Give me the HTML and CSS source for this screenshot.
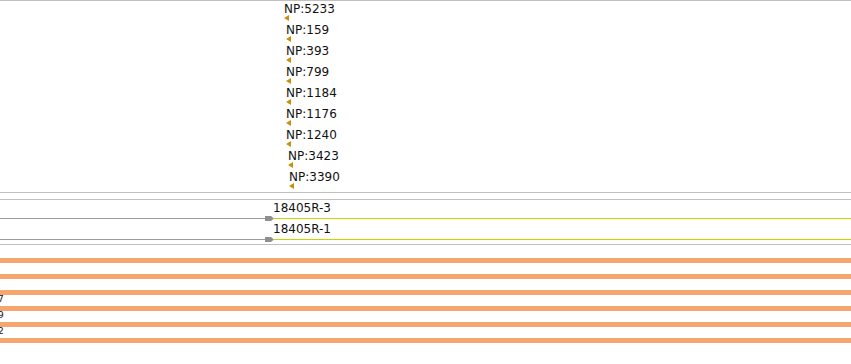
FILE: index.html
```html
<!DOCTYPE html>
<html lang="en">
<head>
  <meta charset="UTF-8" />
  <title>Track view</title>
  <link rel="stylesheet" href="styles.css">
</head>
<body>
  <div class="tracks">
    <div class="track features">
      <div class="feature" style="margin-left:284px"><span class="name">NP:5233</span><svg class="strand" width="5" height="6" viewBox="0 0 5 6"><path d="M5 0V6L0 3Z"/></svg></div>
      <div class="feature" style="margin-left:286px"><span class="name">NP:159</span><svg class="strand" width="5" height="6" viewBox="0 0 5 6"><path d="M5 0V6L0 3Z"/></svg></div>
      <div class="feature" style="margin-left:286px"><span class="name">NP:393</span><svg class="strand" width="5" height="6" viewBox="0 0 5 6"><path d="M5 0V6L0 3Z"/></svg></div>
      <div class="feature" style="margin-left:286px"><span class="name">NP:799</span><svg class="strand" width="5" height="6" viewBox="0 0 5 6"><path d="M5 0V6L0 3Z"/></svg></div>
      <div class="feature" style="margin-left:286px"><span class="name">NP:1184</span><svg class="strand" width="5" height="6" viewBox="0 0 5 6"><path d="M5 0V6L0 3Z"/></svg></div>
      <div class="feature" style="margin-left:286px"><span class="name">NP:1176</span><svg class="strand" width="5" height="6" viewBox="0 0 5 6"><path d="M5 0V6L0 3Z"/></svg></div>
      <div class="feature" style="margin-left:286px"><span class="name">NP:1240</span><svg class="strand" width="5" height="6" viewBox="0 0 5 6"><path d="M5 0V6L0 3Z"/></svg></div>
      <div class="feature" style="margin-left:288px"><span class="name">NP:3423</span><svg class="strand" width="5" height="6" viewBox="0 0 5 6"><path d="M5 0V6L0 3Z"/></svg></div>
      <div class="feature" style="margin-left:289px"><span class="name">NP:3390</span><svg class="strand" width="5" height="6" viewBox="0 0 5 6"><path d="M5 0V6L0 3Z"/></svg></div>
    </div>

    <div class="track spacer"></div>

    <div class="track reads">
      <div class="read">
        <div class="read-name">18405R-3</div>
        <div class="read-line">
          <span class="lead"></span>
          <svg class="arrow" width="9" height="5" viewBox="0 0 9 5"><path d="M0 0H6L9 2.5L6 5H0Z"/></svg>
          <span class="tail"></span>
        </div>
      </div>
      <div class="read">
        <div class="read-name">18405R-1</div>
        <div class="read-line">
          <span class="lead"></span>
          <svg class="arrow" width="9" height="5" viewBox="0 0 9 5"><path d="M0 0H6L9 2.5L6 5H0Z"/></svg>
          <span class="tail"></span>
        </div>
      </div>
    </div>

    <div class="track coverage">
      <div class="band"><div class="bar"></div><div class="gap"></div></div>
      <div class="band"><div class="bar"></div><div class="gap"></div></div>
      <div class="band"><div class="bar"></div><div class="gap"><span class="cut">7</span></div></div>
      <div class="band"><div class="bar"></div><div class="gap"><span class="cut">9</span></div></div>
      <div class="band"><div class="bar"></div><div class="gap"><span class="cut">2</span></div></div>
      <div class="band"><div class="bar"></div><div class="gap"></div></div>
    </div>
  </div>
</body>
</html>
```

FILE: styles.css
```css
body {
  margin: 0;
  background: #fff;
  font-family: 'DejaVu Sans', sans-serif;
  font-size: 12px;
  color: #111;
  width: 851px;
  height: 364px;
  overflow: hidden;
}

.tracks {
  border-top: 1px solid #c0c0c0;
}

.track {
  border-bottom: 1px solid #c0c0c0;
}

/* feature labels */
.features {
  height: 190px;
  padding-top: 1px;
  display: flex;
  flex-direction: column;
}

.feature {
  height: 21px;
  display: flex;
  flex-direction: column;
  align-items: flex-start;
}

.name {
  line-height: 13px;
  padding-top: 1px;
}

.strand {
  display: block;
  margin-top: -1px;
  fill: #c98f0a;
}

.spacer {
  height: 6px;
}

/* reads */
.reads {
  padding: 1px 0;
}

.read {
  height: 21px;
}

.read-name {
  line-height: 13px;
  padding: 1px 0 0 273px;
}

.read-line {
  height: 7px;
  display: flex;
  align-items: center;
}

.lead {
  width: 265px;
  height: 1px;
  background: #999;
}

.arrow {
  display: block;
  fill: #8f8f8f;
}

.tail {
  flex: 1;
  height: 1px;
  background: #c8d400;
}

/* coverage bands */
.coverage {
  padding: 13px 0 12px;
}

.band {
  height: 16px;
}

.bar {
  height: 5px;
  background: #f5a56e;
}

.gap {
  height: 11px;
  overflow: hidden;
}

.cut {
  display: block;
  margin-left: -2px;
  font-size: 9px;
  line-height: 9px;
}
```
